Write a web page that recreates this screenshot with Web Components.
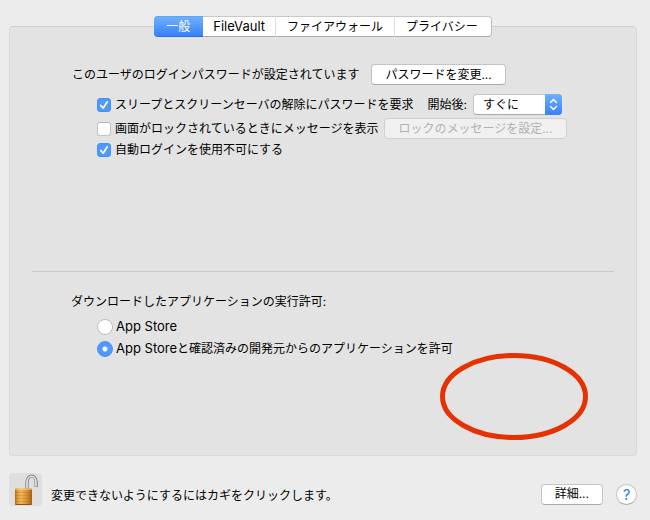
<!DOCTYPE html>
<html lang="ja">
<head>
<meta charset="utf-8">
<title>セキュリティとプライバシー</title>
<style>
html { background: #ececec; }
body { margin: 0; color: #000; font: 12px/16px Inter, "Noto Sans CJK JP", sans-serif; }
</style>
</head>
<body>
<security-pane></security-pane>
<script>
function define(name, html) {
  const template = document.createElement('template');
  template.innerHTML = '<style>*{box-sizing:border-box} button,select,input{font:inherit;color:inherit;margin:0}</style>' + html;
  customElements.define(name, class extends HTMLElement {
    constructor() {
      super();
      this.attachShadow({ mode: 'open' }).append(template.content.cloneNode(true));
    }
    connectedCallback() {
      const control = this.shadowRoot.querySelector('button, input');
      if (!control) return;
      for (const key of ['disabled', 'checked']) {
        if (this.hasAttribute(key)) control[key] = true;
      }
      if (this.hasAttribute('current')) control.setAttribute('aria-selected', 'true');
    }
  });
}

define('mac-button', `
<style>
:host { display: block; flex: none; }
button { display: block; height: 21px; padding: 0 13px; border: 1px solid #c4c4c4; border-bottom-color: #a9a9a9; border-radius: 4px; background: #fff; line-height: 18px; white-space: nowrap; }
button:disabled { background: #f0f0f0; border-color: #d0d0d0; color: #b1b1b1; }
</style>
<button type="button"><slot></slot></button>`);

define('tab-item', `
<style>
:host { display: block; border-left: 1px solid #dcdcdc; }
:host([current]), :host([narrow]) { border-left: 0; }
button { display: block; height: 21px; padding: 0 11px; border: 0; border-top: 1px solid #c8c8c8; border-bottom: 1px solid #a9a9a9; background: #fff; line-height: 18px; white-space: nowrap; }
:host([narrow]) button { padding: 0 10px; }
:host([current]) button { padding: 0 13px 0 12px; border-top-color: #5fa2f3; border-bottom-color: #2b6be0; border-radius: 4px 0 0 4px; background: linear-gradient(#6eb1fb, #3880fd); color: #fff; }
:host([last]) button { padding-right: 13px; border-right: 1px solid #bdbdbd; border-radius: 0 4px 4px 0; }
</style>
<button type="button" role="tab"><slot></slot></button>`);

define('tab-bar', `
<style>
:host { display: flex; justify-content: center; }
</style>
<slot></slot>`);

define('check-option', `
<style>
:host { display: block; }
label { display: flex; align-items: center; gap: 4px; white-space: nowrap; }
input { appearance: none; width: 14px; height: 14px; border: 1px solid #c3c3c3; border-top-color: #b5b5b5; border-radius: 3px; background: #fff; }
.box { display: grid; }
.box > * { grid-area: 1 / 1; }
svg { display: none; pointer-events: none; }
input:checked { border-color: #4690f8; background: #5099fb; }
input:checked + svg { display: block; }
</style>
<label><span class="box"><input type="checkbox"><svg width="14" height="14" viewBox="0 0 14 14" fill="none" stroke="#fff" stroke-width="1.7" stroke-linecap="round" stroke-linejoin="round"><path d="M3.8 7.5 6.1 10.2 10.3 3.8"/></svg></span><span><slot></slot></span></label>`);

define('radio-option', `
<style>
:host { display: block; }
label { display: flex; align-items: center; gap: 3px; white-space: nowrap; }
input { appearance: none; width: 16px; height: 16px; border: 1px solid #bcbcbc; border-radius: 50%; background: #fff; }
input:checked { border-color: #4690f8; background: radial-gradient(circle, #fff 2px, #5099fb 3px); }
</style>
<label><input type="radio"><span><slot></slot></span></label>`);

define('delay-select', `
<style>
:host { display: block; }
label { display: flex; align-items: center; gap: 6px; white-space: nowrap; }
.field { display: grid; grid-template-columns: 1fr 17px; width: 89px; height: 21px; }
select { grid-area: 1 / 1 / 2 / 3; appearance: none; padding: 0 20px 0 9px; border: 1px solid #c4c4c4; border-bottom-color: #a9a9a9; border-radius: 4px; background: #fff; line-height: 18px; }
.arrows { grid-area: 1 / 2; border-radius: 0 4px 4px 0; background: linear-gradient(#6eb1fb, #3880fd); pointer-events: none; z-index: 1; }
svg { display: block; }
</style>
<label><span>開始後:</span><span class="field"><select><option>すぐに</option></select><span class="arrows"><svg width="17" height="21" viewBox="0 0 17 21" fill="none" stroke="#fff" stroke-width="1.5" stroke-linecap="round" stroke-linejoin="round"><path d="M5.5 8.5 8.5 5.5 11.5 8.5M5.5 12.5 8.5 15.5 11.5 12.5"/></svg></span></span></label>`);

define('lock-button', `
<style>
:host { display: block; flex: none; }
button { display: block; width: 33px; height: 33px; padding: 0; border: 0; border-radius: 4px; background: #dfdfdf; }
svg { display: block; }
</style>
<button type="button" aria-label="カギ"><svg width="33" height="33" viewBox="0 0 33 33">
<defs>
<linearGradient id="brass"><stop offset="0" stop-color="#b06a18"/><stop offset=".15" stop-color="#e09a3a"/><stop offset=".35" stop-color="#f2b95c"/><stop offset=".7" stop-color="#d98e2b"/><stop offset="1" stop-color="#a0601a"/></linearGradient>
</defs>
<path d="M18 17V9.5C18 1 27.2 1 27.2 9.5V14" fill="none" stroke="#7f868c" stroke-width="3.4"/>
<path d="M18 16.5V9.5C18 1.4 27 1.4 27 9.5V13.6" fill="none" stroke="#dde2e6" stroke-width="1.7"/>
<rect x="6" y="15.5" width="17" height="16.5" rx="1.2" fill="url(#brass)"/>
<path d="M6.5 16.2H22.5" stroke="#f4cb7e"/>
<path d="M6 19.5H23M6 22.5H23M6 25.5H23M6 28.5H23" stroke="#a96512" stroke-opacity=".35" stroke-width=".8"/>
<path d="M6.5 31.5H22.5" stroke="#8d5410"/>
</svg></button>`);

define('help-button', `
<style>
:host { display: block; flex: none; }
button { display: block; width: 21px; height: 21px; padding: 0; border: 1px solid #c4c4c4; border-bottom-color: #a9a9a9; border-radius: 50%; background: #fff; color: #2a7df5; font-size: 15px; line-height: 19px; text-align: center; }
</style>
<button type="button" aria-label="ヘルプ">?</button>`);

define('settings-panel', `
<style>
:host { display: block; position: relative; padding: 37px 22px 20px; border: 1px solid #d9d9d9; border-top-color: #d0d0d0; border-radius: 4px; background: #e3e3e3; }
</style>
<slot></slot>`);

define('pane-footer', `
<style>
:host { display: flex; align-items: center; gap: 9px; padding: 17px 13px 14px 9px; }
.note { flex: 1; padding-top: 12px; }
.actions { display: flex; align-items: center; gap: 13px; padding-top: 9px; }
</style>
<lock-button></lock-button>
<span class="note">変更できないようにするにはカギをクリックします。</span>
<span class="actions"><slot></slot></span>`);

define('security-pane', `
<style>
:host { display: flex; flex-direction: column; min-height: 100vh; }
tab-bar { z-index: 1; margin: 16px 13px -11px 9px; }
settings-panel { flex: 1; margin: 0 13px 0 9px; }
.latin { font-size: 13px; }
.row { display: flex; align-items: center; white-space: nowrap; }
.login { gap: 12px; padding-left: 40px; }
.options { display: grid; padding: 9px 0 0 65px; }
.wake { gap: 14px; }
.message { gap: 6px; margin: 3px 0; }
hr { height: 1px; margin: 113px 0 22px; border: 0; background: #cacaca; }
h2 { margin: 0 0 8px; padding-left: 39px; font: inherit; }
.sources { display: grid; gap: 5px; padding-left: 65px; }
.ring { position: absolute; left: 430px; top: 326px; width: 148px; height: 87px; overflow: visible; pointer-events: none; }
</style>
<tab-bar role="tablist"><tab-item current>一般</tab-item><tab-item narrow><span class="latin">FileVault</span></tab-item><tab-item>ファイアウォール</tab-item><tab-item last>プライバシー</tab-item></tab-bar>
<settings-panel>
  <div class="row login"><span>このユーザのログインパスワードが設定されています</span><mac-button>パスワードを変更...</mac-button></div>
  <div class="options">
    <div class="row wake"><check-option checked>スリープとスクリーンセーバの解除にパスワードを要求</check-option><delay-select></delay-select></div>
    <div class="row message"><check-option>画面がロックされているときにメッセージを表示</check-option><mac-button disabled>ロックのメッセージを設定...</mac-button></div>
    <check-option checked>自動ログインを使用不可にする</check-option>
  </div>
  <hr>
  <h2>ダウンロードしたアプリケーションの実行許可:</h2>
  <div class="sources">
    <radio-option><span class="latin">App Store</span></radio-option>
    <radio-option checked><span class="latin">App Store</span>と確認済みの開発元からのアプリケーションを許可</radio-option>
  </div>
  <svg class="ring" viewBox="0 0 148 87" aria-hidden="true"><ellipse cx="74" cy="43.5" rx="71.5" ry="41" fill="none" stroke="#e53205" stroke-width="5"/></svg>
</settings-panel>
<pane-footer><mac-button>詳細...</mac-button><help-button></help-button></pane-footer>`);
</script>
</body>
</html>
